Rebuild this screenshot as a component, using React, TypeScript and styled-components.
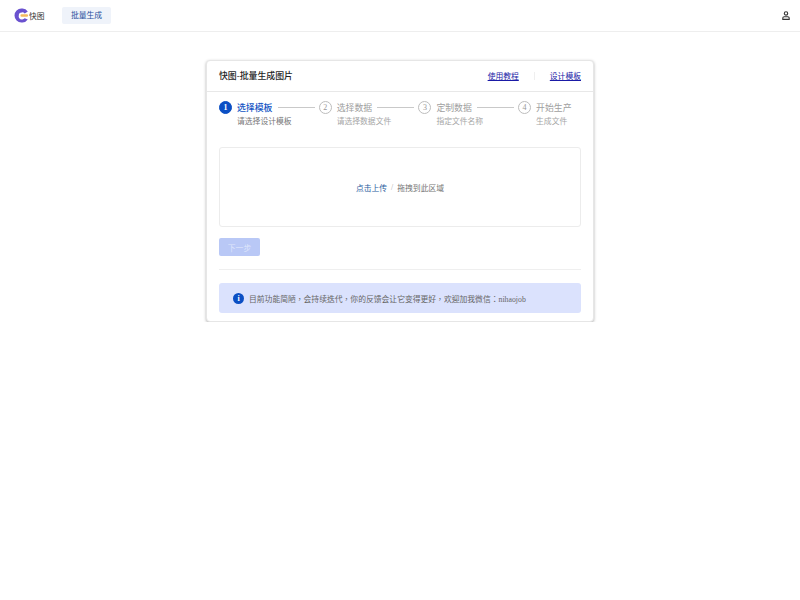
import React from "react";
import styled, { createGlobalStyle } from "styled-components";

const GlobalStyle = createGlobalStyle`
    html, body {
        margin: 0;
        padding: 0;
        background: #fff;
        font-family: "Liberation Serif", "Noto Sans CJK SC", serif;
    }
`;

const TopBar = styled.header`
    height: 31px;
    border-bottom: 1px solid #eeeeee;
    display: flex;
    align-items: center;
    padding: 0 10px 0 14px;
`;

const Brand = styled.div`
    display: flex;
    align-items: center;
    width: 48px;
    font-size: 7.8px;
    color: #333;
`;

const NavItem = styled.div`
    width: 49px;
    height: 17px;
    background: #eff3fa;
    border-radius: 2px;
    color: #1d4f9c;
    font-size: 7.8px;
    line-height: 17px;
    text-align: center;
`;

const UserButton = styled.div`
    margin-left: auto;
    display: flex;
`;

const Card = styled.main`
    width: 388px;
    height: 262px;
    box-sizing: border-box;
    margin: 28px auto 0;
    background: #fff;
    border: 1px solid #e6e6e6;
    border-radius: 4px;
    box-shadow: 0 1px 3px rgba(0, 0, 0, 0.3);
`;

const CardHeader = styled.div`
    height: 30px;
    border-bottom: 1px solid #e8e8e8;
    display: flex;
    align-items: center;
    padding: 0 12px;
`;

const CardTitle = styled.h1`
    margin: 0 0 2px;
    font-size: 8.9px;
    font-weight: 500;
    color: #1f1f1f;
    flex: 1;
`;

const HeaderLink = styled.a`
    margin-bottom: 2px;
    font-size: 7.8px;
    color: #1a1aa6;
    text-decoration: underline;
`;

const LinkDivider = styled.span`
    width: 1px;
    height: 8px;
    background: #efefef;
    margin: 0 15px;
`;

const CardBody = styled.div`
    padding: 8px 12px 0;
`;

const Steps = styled.div`
    display: flex;
    height: 30px;
`;

const Step = styled.div<{ $last?: boolean }>`
    display: flex;
    flex: ${(p) => (p.$last ? "0 0 auto" : "0 0 99.7px")};
`;

const StepNumber = styled.div<{ $active?: boolean }>`
    width: 13px;
    height: 13px;
    box-sizing: border-box;
    flex: none;
    margin-top: 1px;
    border-radius: 50%;
    border: 1px solid ${(p) => (p.$active ? "#0b4fc4" : "#bdbdbd")};
    background: ${(p) => (p.$active ? "#0b4fc4" : "#fff")};
    color: ${(p) => (p.$active ? "#fff" : "#999")};
    font-size: 8px;
    font-weight: ${(p) => (p.$active ? 700 : 400)};
    line-height: 11px;
    text-align: center;
`;

const StepContent = styled.div`
    margin-left: 5px;
    flex: 1;
    min-width: 0;
`;

const StepTitleRow = styled.div`
    display: flex;
    align-items: center;
    height: 15px;
`;

const StepTitle = styled.div<{ $active?: boolean }>`
    font-size: 8.9px;
    font-weight: ${(p) => (p.$active ? 500 : 400)};
    color: ${(p) => (p.$active ? "#1154c4" : "#a0a0a0")};
    white-space: nowrap;
`;

const StepLine = styled.div`
    flex: 1;
    height: 1px;
    background: #c9c9c9;
    margin: 0 4px 0 5px;
`;

const StepHint = styled.div<{ $active?: boolean }>`
    margin-top: 1px;
    font-size: 7.8px;
    line-height: 12px;
    color: ${(p) => (p.$active ? "#777" : "#a6a6a6")};
    white-space: nowrap;
`;

const DropZone = styled.div`
    margin-top: 17px;
    height: 80px;
    box-sizing: border-box;
    border: 1px solid #ececec;
    border-radius: 3px;
    display: flex;
    align-items: center;
    justify-content: center;
    font-size: 7.8px;
    color: #777;
`;

const UploadLink = styled.span`
    color: #2a5c9e;
`;

const Slash = styled.span`
    color: #aaa;
    margin: 0 4px;
`;

const NextButton = styled.button`
    display: block;
    margin-top: 11px;
    width: 41px;
    height: 18px;
    padding: 0;
    border: none;
    border-radius: 2px;
    background: #b9c8f6;
    color: #dfe6fb;
    font-family: inherit;
    font-size: 7.8px;
`;

const Divider = styled.div`
    height: 1px;
    background: #efefef;
    margin-top: 13px;
`;

const Notice = styled.div`
    margin-top: 13px;
    height: 30px;
    border-radius: 3px;
    background: #dbe2fd;
    display: flex;
    align-items: center;
    padding-left: 14px;
    font-family: "Liberation Serif", "Noto Sans CJK TC", serif;
    font-size: 7.8px;
    color: #666;
`;

const NoticeIcon = styled.div`
    width: 11px;
    height: 11px;
    flex: none;
    margin-right: 5px;
    border-radius: 50%;
    background: #0b4fc4;
    color: #fff;
    font-size: 8px;
    font-weight: 700;
    line-height: 11px;
    text-align: center;
`;

const stepList = [
    { title: "选择模板", hint: "请选择设计模板" },
    { title: "选择数据", hint: "请选择数据文件" },
    { title: "定制数据", hint: "指定文件名称" },
    { title: "开始生产", hint: "生成文件" },
];

const Logo = () => (
    <svg width="15" height="15" viewBox="0 0 15 15" style={{ flex: "none" }}>
        <path
            d="M13.8 3.4A6.6 6.6 0 0 0 7.6.6 6.9 6.9 0 0 0 .5 7.5a6.9 6.9 0 0 0 7.1 6.9 6.6 6.6 0 0 0 6.2-2.8l-3.1-1.3a3.2 3.2 0 0 1-2.9 1.1 3 3 0 0 1-3-3.9 3 3 0 0 1 3-3.1 3.2 3.2 0 0 1 2.9 1.1z"
            fill="#6a52cf"
        />
        <rect x="6.5" y="6.2" width="7.5" height="2.6" rx="1" fill="#f4bb5e" />
    </svg>
);

const UserIcon = () => (
    <svg width="8" height="9" viewBox="0 0 8 9" fill="none" stroke="#333" strokeWidth="1.1">
        <circle cx="4" cy="2.4" r="1.7" />
        <path d="M.8 8.4V7C.8 6.2 1.4 5.7 2.2 5.7H5.8C6.6 5.7 7.2 6.2 7.2 7V8.4Z" />
    </svg>
);

const App = () => {
    return (
        <>
            <GlobalStyle />
            <TopBar>
                <Brand>
                    <Logo />
                    快图
                </Brand>
                <NavItem>批量生成</NavItem>
                <UserButton>
                    <UserIcon />
                </UserButton>
            </TopBar>
            <Card>
                <CardHeader>
                    <CardTitle>快图-批量生成图片</CardTitle>
                    <HeaderLink>使用教程</HeaderLink>
                    <LinkDivider />
                    <HeaderLink>设计模板</HeaderLink>
                </CardHeader>
                <CardBody>
                    <Steps>
                        {stepList.map((step, index) => {
                            const active = index === 0;
                            const last = index === stepList.length - 1;
                            return (
                                <Step key={step.title} $last={last}>
                                    <StepNumber $active={active}>{index + 1}</StepNumber>
                                    <StepContent>
                                        <StepTitleRow>
                                            <StepTitle $active={active}>{step.title}</StepTitle>
                                            {!last && <StepLine />}
                                        </StepTitleRow>
                                        <StepHint $active={active}>{step.hint}</StepHint>
                                    </StepContent>
                                </Step>
                            );
                        })}
                    </Steps>
                    <DropZone>
                        <UploadLink>点击上传</UploadLink>
                        <Slash>/</Slash>
                        拖拽到此区域
                    </DropZone>
                    <NextButton disabled>下一步</NextButton>
                    <Divider />
                    <Notice>
                        <NoticeIcon>i</NoticeIcon>
                        目前功能简陋，会持续迭代，你的反馈会让它变得更好，欢迎加我微信：nihaojob
                    </Notice>
                </CardBody>
            </Card>
        </>
    );
};

export default App;
